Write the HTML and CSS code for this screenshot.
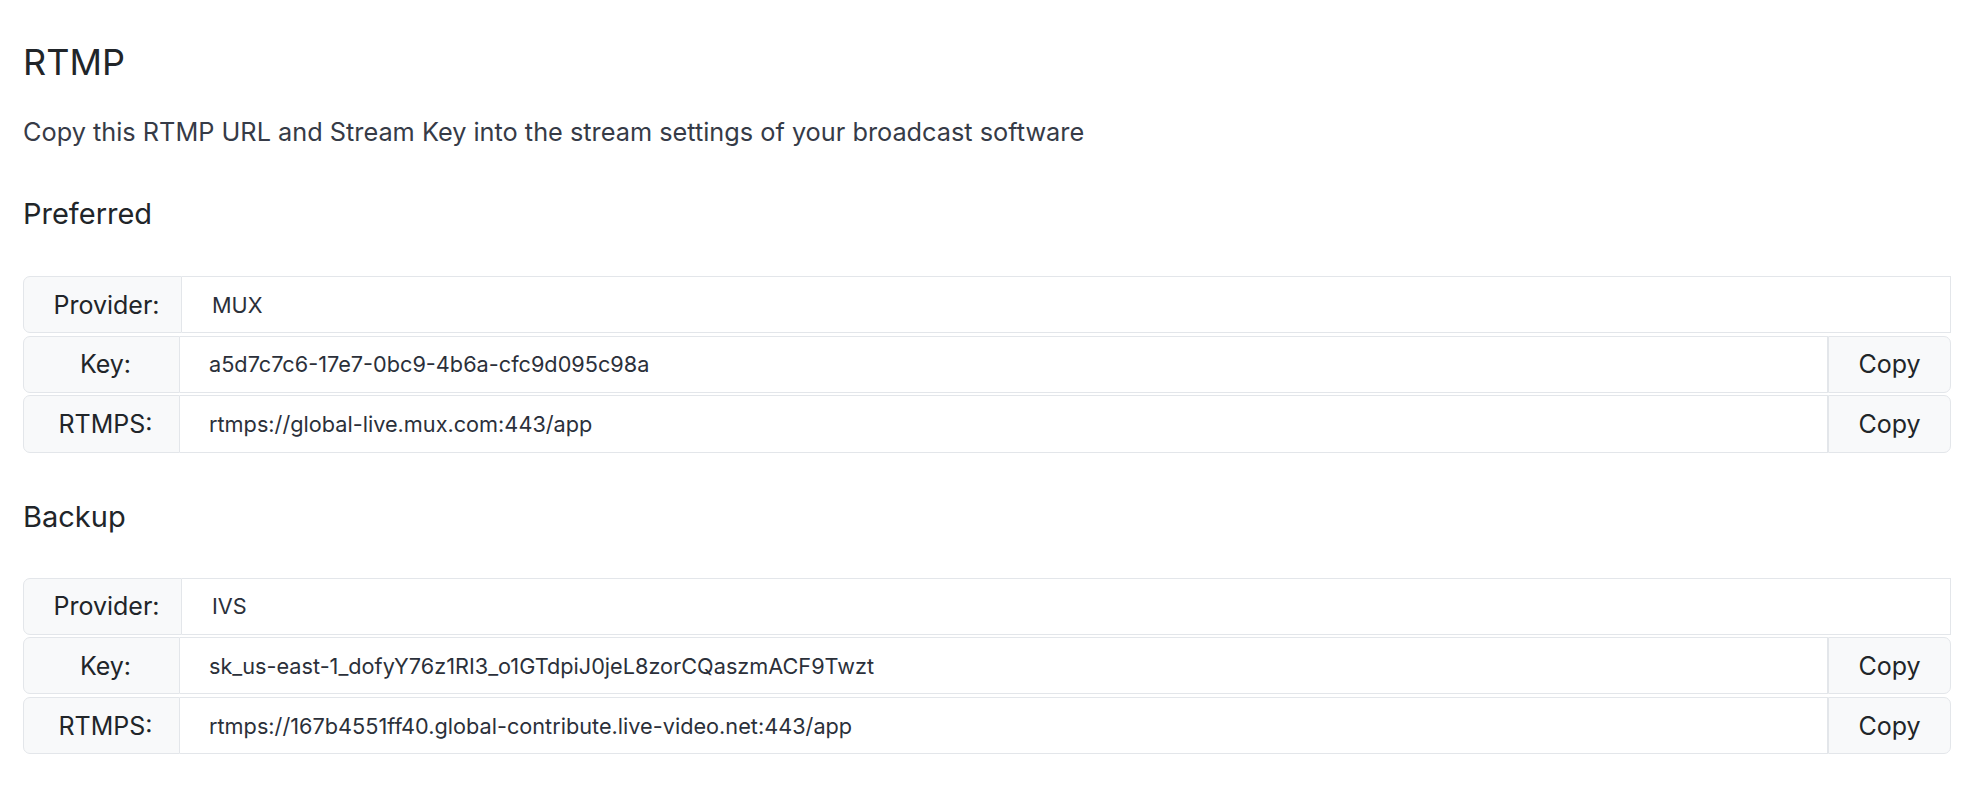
FILE: index.html
```html
<!DOCTYPE html>
<html lang="en">
<head>
<meta charset="utf-8">
<title>RTMP</title>
<link rel="stylesheet" href="styles.css">
</head>
<body>
<main class="page">
  <h1 class="title">RTMP</h1>
  <p class="subtitle">Copy this RTMP URL and Stream Key into the stream settings of your broadcast software</p>

  <section class="section">
    <h2 class="section-title">Preferred</h2>
    <div class="rows">
      <div class="row">
        <div class="label label-wide">Provider:</div>
        <div class="value value-end">MUX</div>
      </div>
      <div class="row">
        <div class="label">Key:</div>
        <div class="value">a5d7c7c6-17e7-0bc9-4b6a-cfc9d095c98a</div>
        <button class="copy" type="button">Copy</button>
      </div>
      <div class="row">
        <div class="label">RTMPS:</div>
        <div class="value">rtmps://global-live.mux.com:443/app</div>
        <button class="copy" type="button">Copy</button>
      </div>
    </div>
  </section>

  <section class="section section-next">
    <h2 class="section-title">Backup</h2>
    <div class="rows">
      <div class="row">
        <div class="label label-wide">Provider:</div>
        <div class="value value-end">IVS</div>
      </div>
      <div class="row">
        <div class="label">Key:</div>
        <div class="value">sk_us-east-1_dofyY76z1RI3_o1GTdpiJ0jeL8zorCQaszmACF9Twzt</div>
        <button class="copy" type="button">Copy</button>
      </div>
      <div class="row">
        <div class="label">RTMPS:</div>
        <div class="value">rtmps://167b4551ff40.global-contribute.live-video.net:443/app</div>
        <button class="copy" type="button">Copy</button>
      </div>
    </div>
  </section>
</main>
</body>
</html>
```

FILE: styles.css
```css
* {
  box-sizing: border-box;
}

html, body {
  margin: 0;
  padding: 0;
  background: #ffffff;
}

body {
  font-family: Inter, "Noto Sans", "Liberation Sans", sans-serif;
  color: #212529;
}

.page {
  padding: 40px 37px 0 23px;
}

.title {
  margin: 0;
  font-size: 36px;
  line-height: 44px;
  font-weight: 400;
  color: #212529;
}

.subtitle {
  margin: 32px 0 3px;
  font-size: 25.3px;
  line-height: 32px;
  color: #363b47;
}

.section {
  margin-top: 48.5px;
}

.section-next {
  margin-top: 47px;
}

.section-title {
  margin: 0 0 45.5px;
  font-size: 29px;
  line-height: 34px;
  font-weight: 400;
  color: #212529;
}

.section-next .section-title {
  margin-bottom: 44px;
}

.rows {
  display: flex;
  flex-direction: column;
  gap: 2.5px;
}

.row {
  display: flex;
  height: 57.2px;
}

.label {
  flex: 0 0 157px;
  display: flex;
  align-items: center;
  justify-content: center;
  padding-left: 8px;
  background: #f8f9fa;
  border: 1px solid #e3e6ea;
  border-radius: 7px 0 0 7px;
  font-size: 25px;
  color: #212529;
}

.label-wide {
  flex-basis: 159px;
}

.value {
  flex: 1 1 auto;
  display: flex;
  align-items: center;
  padding-left: 29px;
  background: #ffffff;
  border: 1px solid #e3e6ea;
  border-left: none;
  font-size: 21.7px;
  color: #2b303a;
  white-space: nowrap;
}

.value-end {
  padding-left: 30px;
}

.copy {
  flex: 0 0 123px;
  margin: 0;
  padding: 0;
  background: #f8f9fa;
  border: 1px solid #e3e6ea;
  border-radius: 0 7px 7px 0;
  font-family: inherit;
  font-size: 25px;
  color: #212529;
  cursor: pointer;
}
```
